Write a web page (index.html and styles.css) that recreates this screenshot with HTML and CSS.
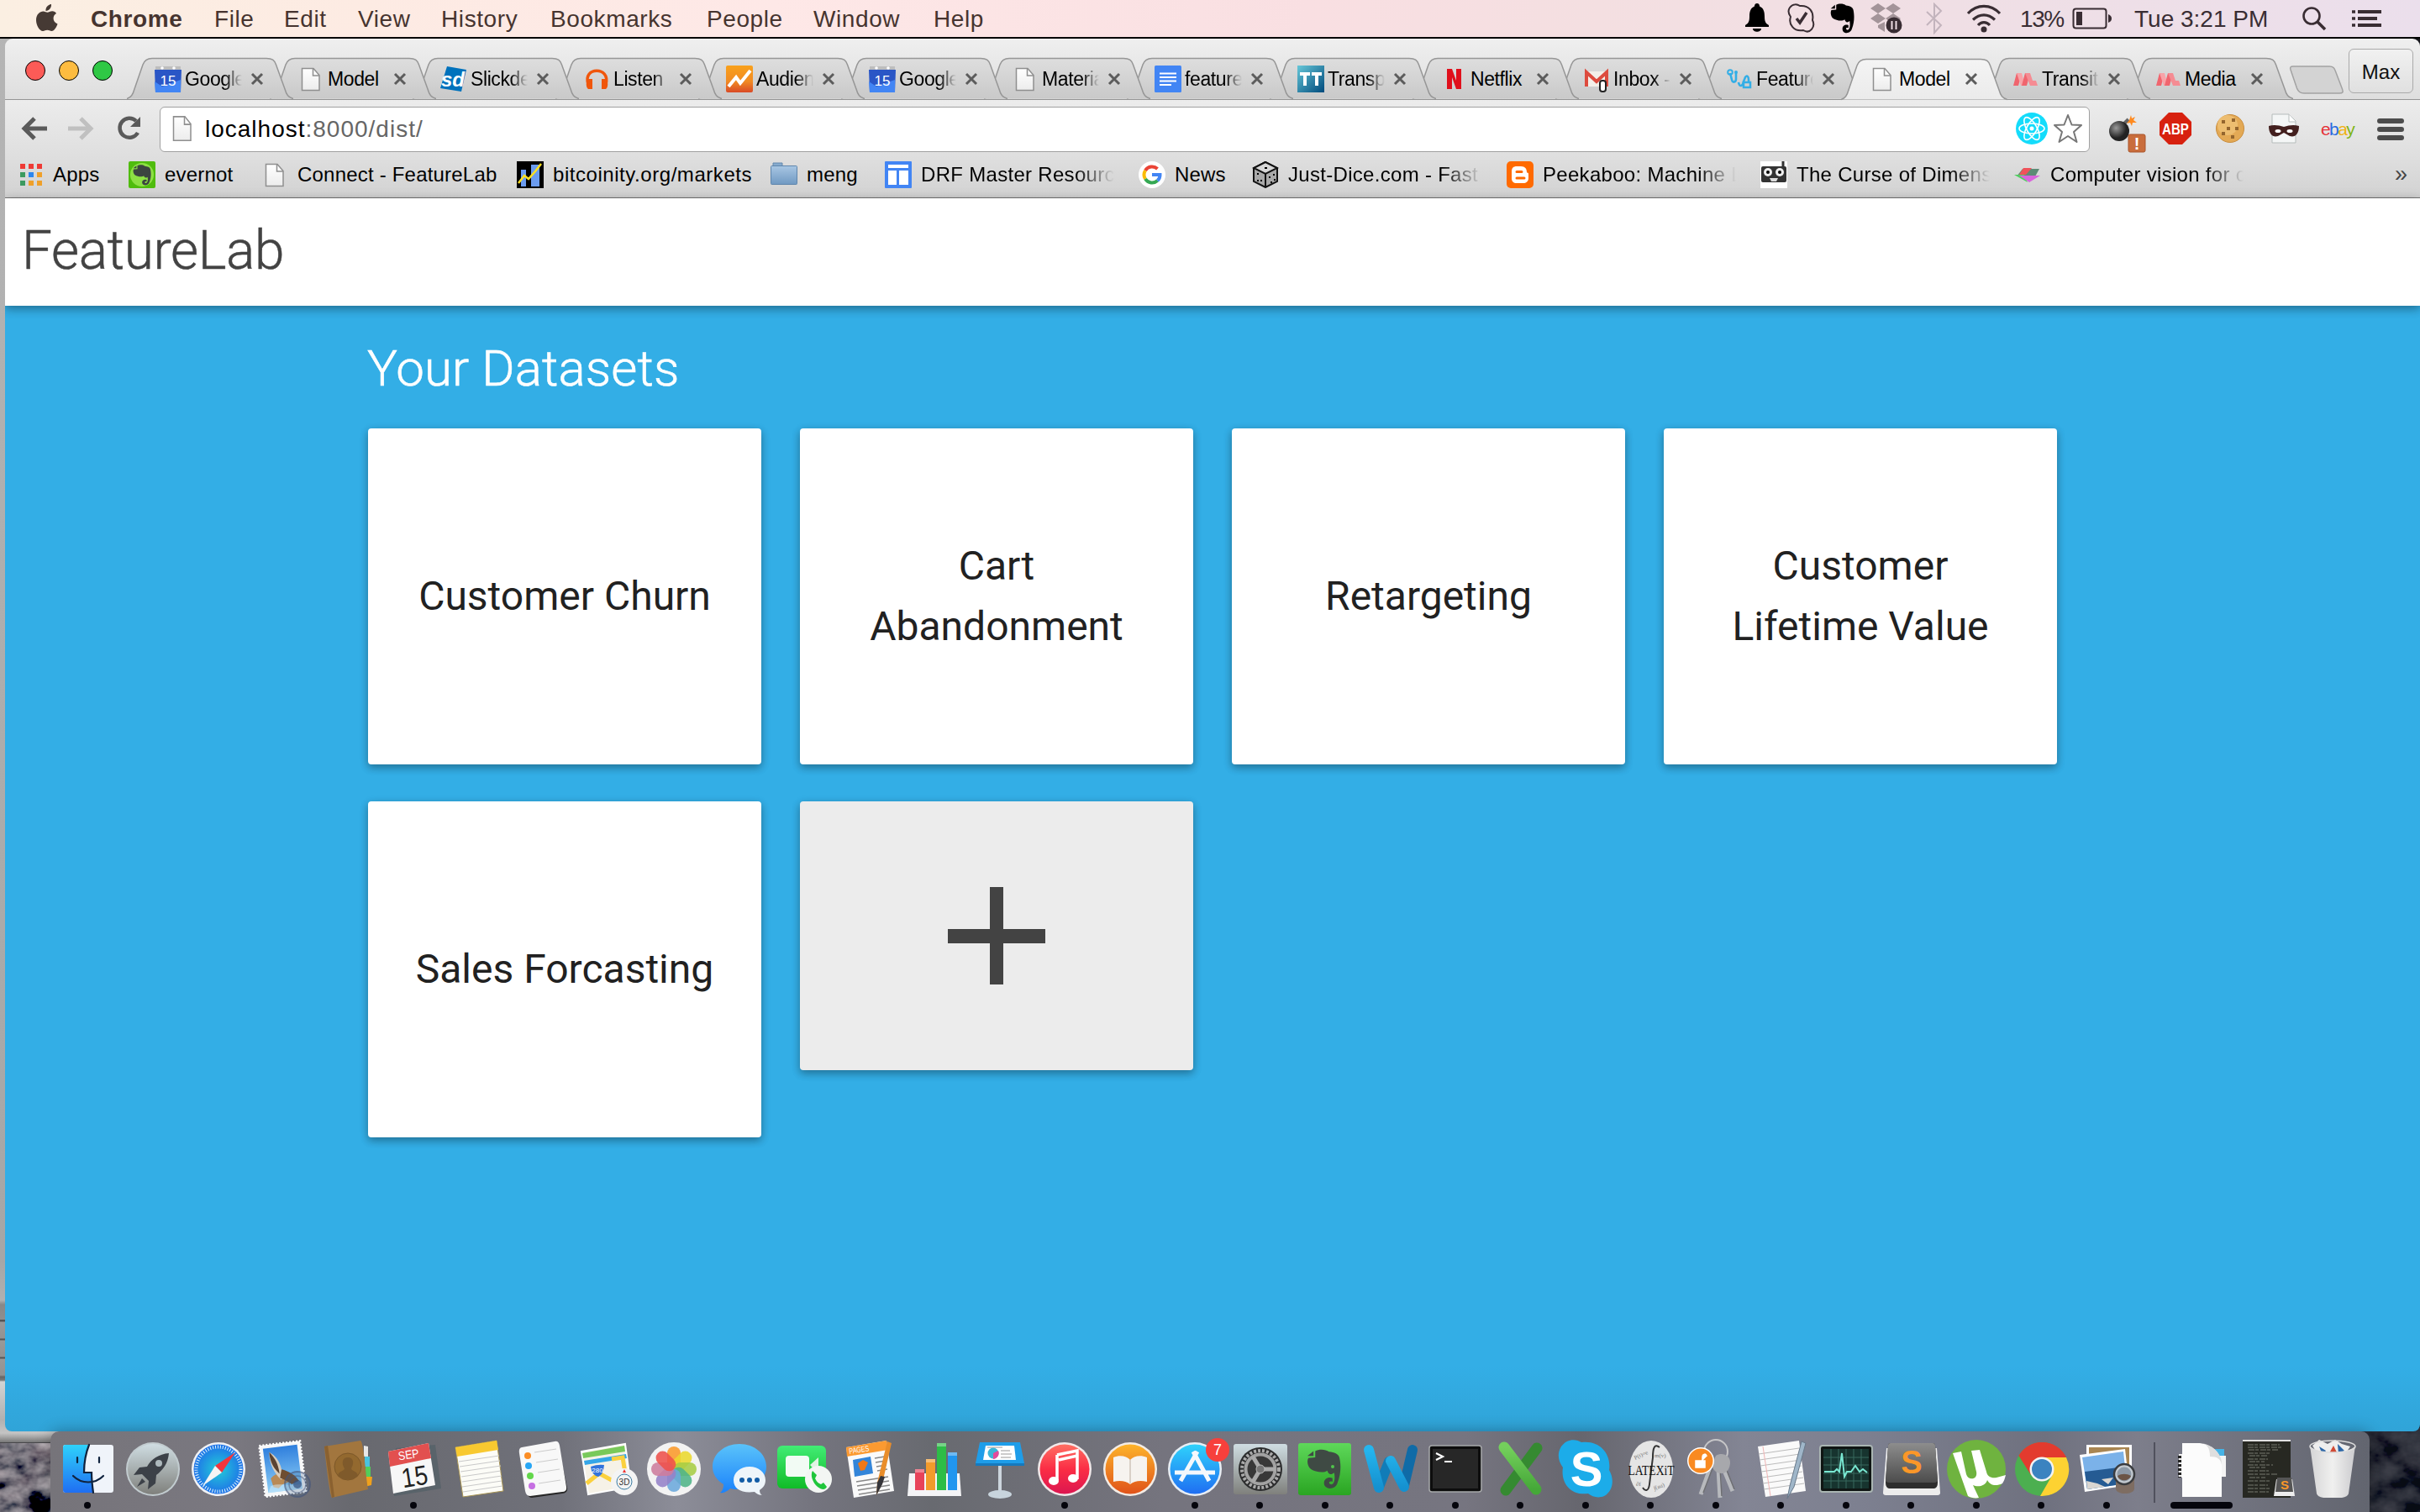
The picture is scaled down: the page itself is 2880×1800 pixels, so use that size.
FILE: index.html
```
<!DOCTYPE html>
<html lang="en">
<head>
<meta charset="utf-8">
<title>FeatureLab</title>
<link rel="stylesheet" href="styles.css">
</head>
<body>
<svg class="defs" width="0" height="0" aria-hidden="true">
  <defs>
    <linearGradient id="g-tab" x1="0" y1="0" x2="0" y2="1"><stop offset="0" stop-color="#dedede"/><stop offset="1" stop-color="#c9c9c9"/></linearGradient>
    <linearGradient id="g-active" x1="0" y1="0" x2="0" y2="1"><stop offset="0" stop-color="#f4f4f4"/><stop offset="1" stop-color="#ebebeb"/></linearGradient>
    <linearGradient id="g-doc" x1="0" y1="0" x2="0" y2="1"><stop offset="0" stop-color="#fff"/><stop offset="1" stop-color="#ececec"/></linearGradient>
    <linearGradient id="g-folder" x1="0" y1="0" x2="0" y2="1"><stop offset="0" stop-color="#a8c6e3"/><stop offset="1" stop-color="#7099c2"/></linearGradient>
    <linearGradient id="g-tt" x1="0" y1="0" x2="1" y2="1"><stop offset="0" stop-color="#66c7d8"/><stop offset="1" stop-color="#004a7c"/></linearGradient>
    <linearGradient id="g-ana" x1="0" y1="0" x2="0" y2="1"><stop offset="0" stop-color="#f9a11b"/><stop offset=".6" stop-color="#f08a24"/><stop offset="1" stop-color="#d94a26"/></linearGradient>
    <linearGradient id="g-cyan" x1="0" y1="0" x2="0" y2="1"><stop offset="0" stop-color="#2fd2fb"/><stop offset="1" stop-color="#1f6ef2"/></linearGradient>
    <linearGradient id="g-silver" x1="0" y1="0" x2="0" y2="1"><stop offset="0" stop-color="#cfdde2"/><stop offset="1" stop-color="#7f807c"/></linearGradient>
    <linearGradient id="g-msg" x1="0" y1="0" x2="0" y2="1"><stop offset="0" stop-color="#5ac3fa"/><stop offset="1" stop-color="#1b82fb"/></linearGradient>
    <linearGradient id="g-green" x1="0" y1="0" x2="0" y2="1"><stop offset="0" stop-color="#42ec75"/><stop offset="1" stop-color="#10bb27"/></linearGradient>
    <linearGradient id="g-red" x1="0" y1="0" x2="0" y2="1"><stop offset="0" stop-color="#ff6f63"/><stop offset=".5" stop-color="#fb2d45"/><stop offset="1" stop-color="#dc1650"/></linearGradient>
    <linearGradient id="g-orange" x1="0" y1="0" x2="0" y2="1"><stop offset="0" stop-color="#fdb32a"/><stop offset="1" stop-color="#e0531a"/></linearGradient>
    <linearGradient id="g-ever" x1="0" y1="0" x2="0" y2="1"><stop offset="0" stop-color="#5ed85a"/><stop offset="1" stop-color="#2aa522"/></linearGradient>
    <linearGradient id="g-word" x1="0" y1="0" x2="0" y2="1"><stop offset="0" stop-color="#25b5ee"/><stop offset="1" stop-color="#1591d0"/></linearGradient>
    <linearGradient id="g-excel" x1="0" y1="0" x2="0" y2="1"><stop offset="0" stop-color="#74cf5c"/><stop offset="1" stop-color="#45a838"/></linearGradient>
    <linearGradient id="g-key" x1="0" y1="0" x2="0" y2="1"><stop offset="0" stop-color="#8d8d8d"/><stop offset="1" stop-color="#4c4c4c"/></linearGradient>
    <linearGradient id="g-sky" x1="0" y1="0" x2="0" y2="1"><stop offset="0" stop-color="#2f7fdd"/><stop offset="1" stop-color="#8fd0f7"/></linearGradient>
    <linearGradient id="g-trash" x1="0" y1="0" x2="1" y2="0"><stop offset="0" stop-color="#d5d5d6"/><stop offset=".5" stop-color="#f0f0ef"/><stop offset="1" stop-color="#cbcbce"/></linearGradient>
    <radialGradient id="g-safari"><stop offset="0" stop-color="#22cdd8"/><stop offset="1" stop-color="#1f72e8"/></radialGradient>
    <radialGradient id="g-bomb" cx=".35" cy=".35"><stop offset="0" stop-color="#999"/><stop offset="1" stop-color="#222"/></radialGradient>
    <symbol id="tab" viewBox="0 0 198 50" overflow="visible"><path d="M0 49.5C5 48 7 45 9 38L19 9C21 3.500 24 1.500 30 1.500H166C173 1.500 175.500 3.500 177.500 9L188 38C190 45 192 48 198 49.500"/></symbol>
    <symbol id="i-doc" viewBox="0 0 32 32"><path d="M5.500 3.500H19l7 8V29.500H5.500Z" fill="url(#g-doc)" stroke="#8f8f8f" stroke-width="1.500"/><path d="M18.500 3.500V12H26" fill="none" stroke="#8f8f8f" stroke-width="1.500"/></symbol>
    <symbol id="i-cal" viewBox="0 0 32 32"><path d="M1 1h30v6H1z" fill="#bdbdbd"/><circle cx="9" cy="3" r="1.800" fill="#fff"/><circle cx="23" cy="3" r="1.800" fill="#fff"/><path d="M0 5h32l-1 27H1z" fill="#2a56c6"/><path d="M0 19l9 6 22-8v15H1z" fill="#4285f4"/><text x="16" y="24" font-size="17" text-anchor="middle" fill="#fff">15</text></symbol>
    <symbol id="i-mat" viewBox="0 0 32 32"><path d="M2 24L6 9h6L8 24z" fill="#f0656e"/><path d="M6 9h6l4 15h-5z" fill="#f8a3a8"/><path d="M12 24L16 9h6l-4 15z" fill="#f0656e"/><path d="M16 9h6l3 9h4l2 6h-9z" fill="#f58c93"/></symbol>
    <symbol id="i-x" viewBox="0 0 16 16"><path d="M2 2L14 14M14 2L2 14" stroke="#5c5c5c" stroke-width="3" fill="none"/></symbol>
    <symbol id="elephant" viewBox="0 0 40 58" preserveAspectRatio="none"><path d="M10 3C14 0 22 0 26 4C32 5 37 7 38 12C40 22 40 36 36 48C34 58 24 59 21 53C18 45 24 39 30 42V47C25 45 25 51 29 51C33 50 33 40 32 34C28 38 25 36 24 31C20 35 10 33 5 29C1 25 0 17 2 13L10 12Z"/><path d="M1 10L8 3V10Z"/></symbol>
  </defs>
</svg>

<div class="screen">
  <svg class="wallpaper" width="2880" height="100" viewBox="0 0 2880 100">
    <filter id="rock" x="0" y="0" width="100%" height="100%"><feTurbulence type="fractalNoise" baseFrequency=".028 .04" numOctaves="4" seed="8"/><feColorMatrix values="1.100 0 0 0 -.38  1 0.050 0 0 -.37  1 0.050 0 0 -.34  0 0 0 0 1"/></filter>
    <rect width="100" height="100" filter="url(#rock)"/><rect x="2780" width="100" height="100" filter="url(#rock)"/><rect x="2780" width="100" height="100" fill="#0b101c" opacity=".72"/>
  </svg>

  <header class="menubar">
    <svg class="apple" width="28" height="34" viewBox="0 0 28 34"><path d="M19 1c.5 4-2.500 8-6.500 8C12 5 15 1.500 19 1zM25 12c-5 3-4.500 10 1.500 12.500-1 3.500-4 8.500-7 8.500-2 0-3-1.200-5.200-1.200S11 33 9 33C5 33 1 26 1 20c0-7 4.500-10.500 8.500-10.500 2 0 3.600 1.300 5 1.300s3.200-1.500 5.800-1.500c2 0 3.700 1 4.700 2.700z" fill="#463a34"/></svg>
    <b class="m w1">Chrome</b><span class="m w2">File</span><span class="m w3">Edit</span><span class="m w4">View</span><span class="m w5">History</span><span class="m w6">Bookmarks</span><span class="m w7">People</span><span class="m w8">Window</span><span class="m">Help</span>
    <div class="status">
      <svg class="s1" width="32" height="36" viewBox="0 0 32 36"><path d="M16 0c2 0 3 1.500 3 3.500 5 2 6 7 6 12 0 6 1 8 5 10.500v2H2v-2c4-2.500 5-4.500 5-10.500 0-5 1-10 6-12C13 1.500 14 0 16 0zM11 30h10c0 5-10 5-10 0z"/></svg>
      <svg class="s2" width="34" height="36" viewBox="0 0 34 36"><path d="M3 5C7 0 12 1 15 3C26 2 32 10 30 20C34 28 27 37 19 32C8 34 1 25 4 16C1 12 1 8 3 5Z" fill="none" stroke="#392d33" stroke-width="2"/><path d="M11 18l4 5 8-12" fill="none" stroke="#392d33" stroke-width="3.500"/></svg>
      <svg class="s3" width="29" height="36" viewBox="0 0 29 36"><use href="#elephant" width="29" height="36"/></svg>
      <svg class="s4" width="40" height="38" viewBox="0 0 40 38"><g fill="#a39499"><path d="M10 1l9 6-9 6-9-6zM28 1l9 6-9 6-9-6zM10 13l9 6-9 6-9-6zM28 13l9 6-9 6-9-6zM10 27l8-4v12l-8-5z"/></g><circle cx="29" cy="27" r="9.500" fill="#392d33"/><path d="M26.500 22v10M31.500 22v10" stroke="#eddde3" stroke-width="2"/></svg>
      <svg class="s5" width="22" height="38" viewBox="0 0 22 38"><path d="M2 11l17 16-8 9V2l8 8L2 27" fill="none" stroke="#c3b4bd" stroke-width="2"/></svg>
      <svg class="s6" width="42" height="34" viewBox="0 0 42 34"><g fill="none" stroke="#392d33" stroke-width="3.200"><path d="M2 11C13-.5 29-.5 40 11M8 18.500c8-7.500 18-7.500 26 0M14 25c4-4.500 10-4.500 14 0"/></g><circle cx="21" cy="30" r="3.500" fill="#392d33"/></svg>
      <span class="s7">13%</span>
      <svg class="s8" width="48" height="26" viewBox="0 0 48 26"><rect x="1.500" y="1.500" width="39" height="23" rx="3" fill="none" stroke="#392d33" stroke-width="2"/><path d="M5 5h7v16H5zM43 8c3 1 4 3 4 5s-1 4-4 5z" fill="#392d33"/></svg>
      <span class="s9">Tue 3:21 PM</span>
      <svg class="s10" width="30" height="30" viewBox="0 0 30 30"><circle cx="12" cy="12" r="9.500" fill="none" stroke="#392d33" stroke-width="2.600"/><path d="M19 19l9 9" stroke="#392d33" stroke-width="3.500"/></svg>
      <svg width="38" height="22" viewBox="0 0 38 22"><path d="M8 3h28M8 11h23M8 19h28" stroke="#392d33" stroke-width="3.800"/><path d="M1 3h4M1 11h4M1 19h4" stroke="#392d33" stroke-width="3.500"/></svg>
    </div>
  </header>

  <main class="window">
    <div class="tabstrip">
      <div class="lights"><i class="red"></i><i class="amber"></i><i class="green"></i></div>
      <div class="tabs">
        <div class="tab t1"><svg class="shape"><use href="#tab"/></svg><svg class="fav"><use href="#i-cal"/></svg><span class="tt fade">Google</span><svg class="x"><use href="#i-x"/></svg></div>
        <div class="tab t2"><svg class="shape"><use href="#tab"/></svg><svg class="fav"><use href="#i-doc"/></svg><span class="tt">Model</span><svg class="x"><use href="#i-x"/></svg></div>
        <div class="tab t3"><svg class="shape"><use href="#tab"/></svg><svg class="fav" viewBox="0 0 32 32"><path d="M8 1l23 4-6 26L0 27z" fill="#0072bc"/><text x="15" y="25" font-size="24" font-weight="bold" font-style="italic" text-anchor="middle" fill="#fff">sd</text></svg><span class="tt fade">Slickde</span><svg class="x"><use href="#i-x"/></svg></div>
        <div class="tab t4"><svg class="shape"><use href="#tab"/></svg><svg class="fav" viewBox="0 0 32 32"><path d="M6 22C-1 1 33 1 27 22" fill="none" stroke="#f0560c" stroke-width="3.500"/><path d="M6 16h5v12H6c-3-2-3-9 0-12zM27 16h-5v12h5c3-2 3-9 0-12z" fill="#f0560c"/></svg><span class="tt fade">Listen</span><svg class="x"><use href="#i-x"/></svg></div>
        <div class="tab t5"><svg class="shape"><use href="#tab"/></svg><svg class="fav" viewBox="0 0 32 32"><rect width="32" height="32" rx="2" fill="url(#g-ana)"/><path d="M3 25l9-11 5 7L29 6" fill="none" stroke="#fff" stroke-width="4"/></svg><span class="tt fade">Audien</span><svg class="x"><use href="#i-x"/></svg></div>
        <div class="tab t6"><svg class="shape"><use href="#tab"/></svg><svg class="fav"><use href="#i-cal"/></svg><span class="tt fade">Google</span><svg class="x"><use href="#i-x"/></svg></div>
        <div class="tab t7"><svg class="shape"><use href="#tab"/></svg><svg class="fav"><use href="#i-doc"/></svg><span class="tt fade">Materia</span><svg class="x"><use href="#i-x"/></svg></div>
        <div class="tab t8"><svg class="shape"><use href="#tab"/></svg><svg class="fav" viewBox="0 0 32 32"><rect width="32" height="32" rx="1.500" fill="#4285f4"/><path d="M6 9.500h20M6 14h20M6 18.500h20M6 23h14" stroke="#fff" stroke-width="2.200"/></svg><span class="tt fade">feature</span><svg class="x"><use href="#i-x"/></svg></div>
        <div class="tab t9"><svg class="shape"><use href="#tab"/></svg><svg class="fav" viewBox="0 0 32 32"><rect width="32" height="32" fill="url(#g-tt)"/><path d="M3 8h12v4h-4v12H7V12H3zM17 8h12v4h-4v12h-4V12h-4z" fill="#fff"/></svg><span class="tt fade">Transp</span><svg class="x"><use href="#i-x"/></svg></div>
        <div class="tab t10"><svg class="shape"><use href="#tab"/></svg><svg class="fav" viewBox="0 0 32 32"><path d="M8 4h6l5 14V4h6v24h-6l-5-14v14H8z" fill="#e0101c"/></svg><span class="tt">Netflix</span><svg class="x"><use href="#i-x"/></svg></div>
        <div class="tab t11"><svg class="shape"><use href="#tab"/></svg><svg class="fav" viewBox="0 0 32 32"><path d="M3 7h26v18H3z" fill="#f3efe9"/><path d="M4 25V8l12 11L28 8v17" fill="none" stroke="#dd4b3e" stroke-width="4"/><rect x="20" y="18" width="7" height="13" rx="3" fill="#fff" stroke="#222" stroke-width="2"/></svg><span class="tt fade">Inbox -</span><svg class="x"><use href="#i-x"/></svg></div>
        <div class="tab t12"><svg class="shape"><use href="#tab"/></svg><svg class="fav" viewBox="0 0 32 32"><path d="M5 9l2 8c1 4 5 3 5-1V9M15 20c1 6 5 5 6-1l2-5c2-3 4-1 4 3v3" fill="none" stroke="#33aee6" stroke-width="2.600"/><circle cx="5" cy="8" r="2.800" fill="none" stroke="#33aee6" stroke-width="2"/><circle cx="12" cy="8" r="2" fill="#33aee6"/><rect x="21" y="20" width="8" height="6" fill="none" stroke="#33aee6" stroke-width="2.500"/></svg><span class="tt fade">Feature</span><svg class="x"><use href="#i-x"/></svg></div>
        <div class="tab active"><svg class="shape"><use href="#tab"/></svg><svg class="fav"><use href="#i-doc"/></svg><span class="tt">Model</span><svg class="x"><use href="#i-x"/></svg></div>
        <div class="tab t14"><svg class="shape"><use href="#tab"/></svg><svg class="fav"><use href="#i-mat"/></svg><span class="tt fade">Transit</span><svg class="x"><use href="#i-x"/></svg></div>
        <div class="tab t15"><svg class="shape"><use href="#tab"/></svg><svg class="fav"><use href="#i-mat"/></svg><span class="tt">Media</span><svg class="x"><use href="#i-x"/></svg></div>
      </div>
      <svg class="newtab" width="66" height="34" viewBox="0 0 66 34"><path d="M5 1H48C53 1 54 3 55.500 7L63.500 28C65 32 64 33 60 33H18C13 33 11 31 9.500 27L2 5C1 2 2 1 5 1Z" fill="#d3d3d3" stroke="#a2a2a2" stroke-width="1.500"/></svg>
      <div class="profile">Max</div>
    </div>

    <div class="toolbar">
      <svg class="back" width="34" height="30" viewBox="0 0 34 30"><path d="M17 3L5 15l12 12M6 15h26" fill="none" stroke="#5a5a5a" stroke-width="5"/></svg>
      <svg class="fwd" width="34" height="30" viewBox="0 0 34 30"><path d="M17 3l12 12-12 12M28 15H2" fill="none" stroke="#c0c0c0" stroke-width="5"/></svg>
      <svg class="reload" width="30" height="30" viewBox="0 0 30 30"><path d="M25 20A11.500 11.500 0 1 1 23 6" fill="none" stroke="#5a5a5a" stroke-width="4.500"/><path d="M28 1v12H16z" fill="#5a5a5a"/></svg>
      <div class="omnibox">
        <svg width="32" height="35" viewBox="0 0 32 32" preserveAspectRatio="none"><use href="#i-doc"/></svg>
        <span class="url">localhost<em>:8000/dist/</em></span>
        <svg class="react" width="38" height="38" viewBox="0 0 38 38"><circle cx="19" cy="19" r="19" fill="#14dcfb"/><g fill="none" stroke="#fff" stroke-width="1.600"><ellipse cx="19" cy="19" rx="15" ry="6"/><ellipse cx="19" cy="19" rx="15" ry="6" transform="rotate(60 19 19)"/><ellipse cx="19" cy="19" rx="15" ry="6" transform="rotate(120 19 19)"/></g><circle cx="19" cy="19" r="2.500" fill="#fff"/></svg>
        <svg width="36" height="36" viewBox="0 0 36 36"><path d="M18 2l4.500 11.500L34 14l-9 8 3.500 12L18 27 7.500 34 11 22l-9-8 11.500-.5z" fill="#fff" stroke="#777" stroke-width="2" stroke-linejoin="round"/></svg>
      </div>
      <svg class="bomb" width="48" height="46" viewBox="0 0 48 46"><path d="M17 12L24 5" stroke="#666" stroke-width="4"/><path d="M27 0l1 4 4-2-2 4 4 3-5 0-1 4-2-4-4 1 3-4z" fill="#ff8a1f"/><circle cx="13" cy="19" r="12" fill="url(#g-bomb)"/><rect x="24" y="23" width="20" height="21" rx="2" fill="#c96d3c" stroke="#a9542a"/><text x="34" y="41" font-size="20" font-weight="bold" text-anchor="middle" fill="#fff">!</text></svg>
      <svg class="abp" width="38" height="38" viewBox="0 0 38 38"><path d="M11 0h16l11 11v16L27 38H11L0 27V11z" fill="#d7210f"/><text transform="translate(19 25.500) scale(.84 1)" font-size="18" font-weight="bold" text-anchor="middle" fill="#fff">ABP</text></svg>
      <svg class="cookie" width="36" height="36" viewBox="0 0 36 36"><circle cx="18" cy="18" r="16.500" fill="#e3a955" stroke="#c98d3e"/><circle cx="15" cy="14" r="12" fill="#edbd70"/><g fill="#94652e"><rect x="8" y="8" width="4" height="4"/><rect x="20" y="6" width="4" height="4"/><rect x="14" y="16" width="4" height="4"/><rect x="24" y="16" width="4" height="4"/><rect x="8" y="22" width="4" height="4"/><rect x="19" y="26" width="4" height="4"/></g></svg>
      <svg class="mask" width="40" height="36" viewBox="0 0 40 36"><path d="M6 1h20l8 8v26H6z" fill="#f4f6f6" stroke="#b5bcbb"/><path d="M26 1v9h8" fill="#fff" stroke="#b5bcbb"/><path d="M2 15c6-2 12-1 18 1 6-2 12-3 18-1 0 10-5 14-11 12l-7-4-7 4C7 29 2 25 2 15z" fill="#43201f"/><ellipse cx="13" cy="21" rx="3.500" ry="2" fill="#fff"/><ellipse cx="27" cy="21" rx="3.500" ry="2" fill="#fff"/></svg>
      <span class="ebay"><i class="e1">e</i><i class="e2">b</i><i class="e3">a</i><i class="e4">y</i></span>
      <svg width="32" height="28" viewBox="0 0 32 28"><path d="M3 4h26M3 14h26M3 24h26" stroke="#4c4c4c" stroke-width="6" stroke-linecap="round"/></svg>
    </div>

    <nav class="bookmarks">
      <div class="bm b0"><svg width="28" height="28" viewBox="0 0 28 28"><path d="M0 1h6v6H0zM10 1h6v6h-6zM20 1h6v6h-6z" fill="#ee3a35"/><path d="M0 11h6v6H0zM0 21h6v6H0z" fill="#3c9a5f"/><path d="M10 11h6v6h-6z" fill="#2c86ef"/><path d="M20 11h6v6h-6zM10 21h6v6h-6zM20 21h6v6h-6z" fill="#efa02a"/></svg><span>Apps</span></div>
      <div class="bm b1"><svg viewBox="0 0 32 32"><rect width="32" height="32" rx="2" fill="#4fbc0d"/><circle cx="16" cy="16" r="14" fill="#a8f05c" opacity=".7"/><use href="#elephant" x="5" y="4" width="22" height="25" fill="#3c4540"/></svg><span>evernot</span></div>
      <div class="bm b2"><svg><use href="#i-doc"/></svg><span>Connect - FeatureLab</span></div>
      <div class="bm b3"><svg viewBox="0 0 32 32"><rect width="32" height="32"/><path d="M5 10h6v20H5zM17 4h10v26H17z" fill="#6b9cf0"/><path d="M2 26l7-9 5 4 8-9 7-9" fill="none" stroke="#ffe020" stroke-width="2.500"/></svg><span class="wide-text">bitcoinity.org/markets</span></div>
      <div class="bm b4"><svg viewBox="0 0 32 32"><path d="M3 5V2h11v4" fill="#86aacd" stroke="#6489ae"/><rect x=".5" y="5.500" width="31" height="22" rx="1" fill="url(#g-folder)" stroke="#5f86ad"/></svg><span>meng</span></div>
      <div class="bm b5"><svg viewBox="0 0 32 32"><rect width="32" height="32" rx="1" fill="#4285f4"/><path d="M4 4h24v4H4zM4 11h10v17H4zM17 11h11v17H17z" fill="#fff"/></svg><span class="fade">DRF Master Resourc</span></div>
      <div class="bm b6"><svg viewBox="0 0 32 32"><circle cx="16" cy="16" r="16" fill="#fff"/><g fill="none" stroke-width="4"><path d="M22.500 9A9.500 9.500 0 0 0 8 11" stroke="#ea4335"/><path d="M8 11a9.500 9.500 0 0 0 0 10" stroke="#fbbc05"/><path d="M8 21a9.500 9.500 0 0 0 14.500 2" stroke="#34a853"/><path d="M22.500 23a9 9 0 0 0 3-7H16" stroke="#4285f4"/></g></svg><span>News</span></div>
      <div class="bm b7"><svg viewBox="0 0 32 32"><path d="M16 1L2 8v16l14 7 14-7V8z" fill="#a9a9a9" stroke="#111" stroke-width="2"/><path d="M16 1L2 8l14 7 14-7z" fill="#d7d7d7" stroke="#111" stroke-width="2"/><path d="M16 15v16" stroke="#111" stroke-width="2"/><path d="M6 14h2v2H6zM10 22h2v2h-2zM6 22h2v2H6zM20 18h2v2h-2zM25 15h2v2h-2zM22 24h2v2h-2zM26 21h2v2h-2zM15 7h3v2h-3z"/></svg><span class="fade">Just-Dice.com - Fast</span></div>
      <div class="bm b8"><svg viewBox="0 0 32 32"><rect width="32" height="32" rx="5" fill="#ff6a00"/><path d="M12 6h5c5 0 7 3 7 7 0 1 2 0 2 2v5c0 4-3 6-6 6h-8c-4 0-6-2-6-6v-8c0-4 2-6 6-6z" fill="#fff"/><path d="M12 12.500h6M12 20h9" stroke="#ff6a00" stroke-width="3" stroke-linecap="round"/></svg><span class="fade">Peekaboo: Machine L</span></div>
      <div class="bm b9"><svg viewBox="0 0 32 32"><rect width="32" height="32" fill="#fff"/><rect x="1" y="6" width="30" height="19" rx="2" fill="#333"/><path d="M27 0v9" stroke="#333" stroke-width="3"/><circle cx="9" cy="13" r="5" fill="#eee"/><circle cx="23" cy="13" r="5" fill="#eee"/><circle cx="9" cy="13" r="2"/><circle cx="23" cy="13" r="2"/><path d="M11 20h10l-2 4h-6z" fill="#ddd"/></svg><span class="fade">The Curse of Dimens</span></div>
      <div class="bm b10"><svg viewBox="0 0 32 32"><path d="M10 9h20l-5 9H3z" fill="#5d8b76"/><path d="M11 8h10l-7 8H6z" fill="#f0525a"/><path d="M0 16h12l4 9z" fill="#4fcf60"/><path d="M6 17h25L18 25z" fill="#d964dc"/></svg><span class="fade">Computer vision for c</span></div>
      <span class="more">»</span>
    </nav>

    <section class="page">
      <header class="appbar"><h1>FeatureLab</h1></header>
      <div class="content">
        <h2>Your Datasets</h2>
        <div class="grid">
          <div class="card">Customer Churn</div>
          <div class="card">Cart<br>Abandonment</div>
          <div class="card">Retargeting</div>
          <div class="card">Customer<br>Lifetime Value</div>
          <div class="card">Sales Forcasting</div>
          <div class="card add"><svg width="118" height="118" viewBox="0 0 118 118"><path d="M51 1h16v50h50v17H67v49H51V68H1V51h50z" fill="#434343"/></svg></div>
        </div>
      </div>
    </section>
  </main>

  <footer class="dock">
    <div class="app on"><svg viewBox="0 0 72 72"><rect x="6" y="7" width="60" height="57" rx="3" fill="#f0f4fa"/><path d="M9 7H37C33 17 31 28 31 40h9c0 9 1 17 2 24H9a3 3 0 0 1-3-3V10a3 3 0 0 1 3-3z" fill="url(#g-cyan)"/><path d="M37 7C33 17 31 28 31 40h9c0 9 1 17 2 24M23 22v6M49 22v6M18 44c10 10 26 10 36 0" fill="none" stroke="#10233e" stroke-width="2.200" stroke-linecap="round"/></svg></div>
    <div class="app"><svg viewBox="0 0 72 72"><circle cx="36" cy="36" r="32" fill="#c2ccd0"/><circle cx="36" cy="36" r="30" fill="url(#g-silver)"/><path d="M55 17C43 18 34 24 29 33l-9 1-7 9 10-1 8 8-1 10 9-7 1-10C48 37 54 29 55 17zM23 47l-6 10 10-6z" fill="#3c4148"/><circle cx="43" cy="29" r="4" fill="#aeb9bd"/></svg></div>
    <div class="app"><svg viewBox="0 0 72 72"><circle cx="36" cy="36" r="32" fill="#f1f2f4"/><circle cx="36" cy="36" r="29.500" fill="url(#g-safari)"/><circle cx="36" cy="36" r="26.500" fill="none" stroke="#dff3ff" stroke-width="4" stroke-dasharray="1 2"/><path d="M56 16L40 40 32 32z" fill="#f3343c"/><path d="M32 32l8 8-23 16z" fill="#f4f4f4"/></svg></div>
    <div class="app"><svg viewBox="0 0 72 72"><g transform="rotate(-7 36 36)"><rect x="11" y="5" width="49" height="61" fill="#f7f7f7" stroke="#fff" stroke-width="2.500" stroke-dasharray="2 2"/><rect x="15" y="9" width="41" height="53" fill="url(#g-sky)"/><path d="M20 45c5-4 9-5 13-4l16 4-4 6-12 3-5 4-6-2z" fill="#b98a55"/><path d="M22 14c7 5 11 12 12 22l6 8-8 4c-7-8-12-20-10-34z" fill="#d8cdbd"/><path d="M22 14c6 8 9 15 9 27-5-6-10-14-9-27z" fill="#5b4433"/><path d="M34 36c8 3 15 8 19 16l-9 3c-4-4-9-7-13-9z" fill="#6e4d31"/><path d="M19 54c10-3 25 4 37 2v6H15z" fill="#d9f0fb" opacity=".5"/></g><circle cx="53" cy="54" r="15" fill="#3d5f8c" fill-opacity=".25" stroke="#44557a" stroke-opacity=".6" stroke-width="2"/><circle cx="53" cy="54" r="10" fill="none" stroke="#44557a" stroke-opacity=".5" stroke-width="1.500"/><circle cx="53" cy="54" r="5" fill="#34507e" fill-opacity=".7"/></svg></div>
    <div class="app"><svg viewBox="0 0 72 72"><path d="M54 8l5 1v12h-5z" fill="#e8e8e8"/><path d="M55 21h6v12h-6z" fill="#4ac3df"/><path d="M56 33h6v12h-6z" fill="#53cd5a"/><path d="M57 45h7l-1 10-8 2z" fill="#f0a11c"/><path d="M7 9L50 2c4 2 6 40 9 58L16 70c-3-5-7-40-9-61z" fill="#a2763e"/><path d="M7 9l4-1c3 18 6 45 8 61l-3 1z" fill="#8a6130"/><circle cx="35" cy="33" r="16" fill="#93692f" stroke="#7c5829"/><path d="M35 22c8 0 7 9 4 13 0 4 7 2 8 9-7 6-17 6-24 0 1-7 8-5 8-9-3-4-4-13 4-13z" fill="#7f5a2b"/></svg></div>
    <div class="app on"><svg viewBox="0 0 72 72"><path d="M15 11l47-4 7 52-56 9z" fill="#59636a"/><path d="M6 15L54 5l8 50-50 10z" fill="#f7f7f7"/><path d="M6 15L54 5l3 18-49 10z" fill="#e2504f"/><g transform="rotate(-9 36 36)"><text transform="translate(33 23) scale(.95 1.100)" font-size="13" text-anchor="middle" fill="#fff">SEP</text><text transform="translate(36 56) scale(.9 1.050)" font-size="31" text-anchor="middle" fill="#222">15</text></g></svg></div>
    <div class="app"><svg viewBox="0 0 72 72"><path d="M8 10l49-8 8 60-48 7z" fill="#fcfcf7" stroke="#a99554"/><path d="M8 10l49-8 2 11-49 8z" fill="#f8c930"/><path d="M12 27l48-7M13 33l48-7M14 39l48-7M15 45l47-7M16 51l47-7M16 57l47-7M17 63l47-7" stroke="#c9c9c9"/></svg></div>
    <div class="app"><svg viewBox="0 0 72 72"><path d="M12 12L48 5q5-1 6 5l10 48q1 6-6 7L22 70q-5 0-6-7z" fill="#272727"/><path d="M10 10L49 3q5-1 6 5l8 49q1 6-5 6L20 68q-5 0-6-6L7 17q-1-6 3-7z" fill="#f8f8f8"/><circle cx="17" cy="20" r="4" fill="#fb8d24"/><circle cx="18" cy="32" r="4" fill="#27a6f5"/><circle cx="20" cy="44" r="4" fill="#63d74b"/><circle cx="22" cy="56" r="4" fill="#c66fe2"/><path d="M25 16l26-4M27 28l26-4M29 40l26-4M30 53l26-4" stroke="#ccc"/></svg></div>
    <div class="app"><svg viewBox="0 0 72 72"><path d="M3 15L55 6l7 51-51 9z" fill="#f6f2e7" stroke="#fff" stroke-width="2"/><path d="M4 17l50-9 1 7-50 8z" fill="#79c95a"/><path d="M6 26l50-8 1 5-50 8z" fill="#35a6e8"/><path d="M9 53l15-12 22 12 15-2M39 24l13-2 5 31" fill="none" stroke="#fbd13e" stroke-width="5"/><path d="M14 33q8-3 16-2-1 12-7 14-8-2-9-12z" fill="#3173dc"/><text x="22" y="40" font-size="8" text-anchor="middle" fill="#fff">280</text><circle cx="54" cy="51" r="16" fill="#f4f4f4"/><circle cx="54" cy="51" r="9" fill="none" stroke="#397ba3"/><path d="M54 36l2 4h-4z" fill="#e33"/><text x="54" y="55" font-size="10" text-anchor="middle" fill="#333">3D</text></svg></div>
    <div class="app"><svg viewBox="0 0 72 72"><circle cx="36" cy="36" r="32" fill="#f3f3f3"/><g fill-opacity=".88"><rect x="28" y="9" width="16" height="27" rx="8" fill="#fb9a2a"/><rect x="28" y="9" width="16" height="27" rx="8" fill="#ead82e" transform="rotate(45 36 36)"/><rect x="28" y="9" width="16" height="27" rx="8" fill="#a7cd44" transform="rotate(90 36 36)"/><rect x="28" y="9" width="16" height="27" rx="8" fill="#4fb487" transform="rotate(135 36 36)"/><rect x="28" y="9" width="16" height="27" rx="8" fill="#6ba8dc" transform="rotate(180 36 36)"/><rect x="28" y="9" width="16" height="27" rx="8" fill="#9482c8" transform="rotate(225 36 36)"/><rect x="28" y="9" width="16" height="27" rx="8" fill="#cd7c9d" transform="rotate(270 36 36)"/><rect x="28" y="9" width="16" height="27" rx="8" fill="#ee514b" transform="rotate(315 36 36)"/></g></svg></div>
    <div class="app"><svg viewBox="0 0 72 72"><path d="M36 6c18 0 32 12 32 27S54 60 36 60c-4 0-8 0-11-1-4 4-9 6-12 5 3-2 4-6 4-10C9 49 4 42 4 33 4 18 18 6 36 6z" fill="url(#g-msg)"/><path d="M48 33c11 0 19 7 19 16 0 6-3 9-7 12 0 3 1 5 3 6-4 0-7-2-9-4-15 2-25-3-25-14 0-9 8-16 19-16z" fill="#eef5fa"/><circle cx="39" cy="49" r="3" fill="#125ca6"/><circle cx="48" cy="49" r="3" fill="#125ca6"/><circle cx="57" cy="49" r="3" fill="#125ca6"/></svg></div>
    <div class="app"><svg viewBox="0 0 72 72"><rect x="4" y="8" width="58" height="51" rx="6" fill="url(#g-green)"/><rect x="14" y="20" width="28" height="25" rx="4" fill="#f2fbf4"/><path d="M43 31l10-9v20z" fill="#dff3e3"/><circle cx="53" cy="48" r="16" fill="#f3f6f3"/><path d="M46 38l5 5-2 4c2 4 4 6 7 7l3-2 4 5c-2 4-6 4-11 0-6-5-9-14-6-19z" fill="#1fc63b"/></svg></div>
    <div class="app"><svg viewBox="0 0 72 72"><path d="M8 10L56 2l9 60-48 8z" fill="#fafafa"/><path d="M8 10L56 2l2 11-49 8z" fill="#fb9a31"/><text transform="translate(12 18) rotate(-9) scale(.75 1)" font-size="9.500" fill="#fff">PAGES</text><path d="M16 25l21-4 3 20-22 4z" fill="#3385d9"/><path d="M22 29l6-4 6 3-4 9-5 1z" fill="#f07818"/><path d="M42 23l12-2M43 28l12-2M44 33l12-2M45 38l12-2M20 51l38-6M21 56l38-6M22 61l38-6M23 66l37-6" stroke="#888" stroke-width="1.500"/><path d="M57 3l5 2-11 48-7 14 1-15z" fill="#e98d2a"/><path d="M49 44l5 1-3 9-7 13 1-15z" fill="#35353a"/></svg></div>
    <div class="app"><svg viewBox="0 0 72 72"><path d="M6 41h60l2 27H4z" fill="#f4f4f6"/><rect x="13" y="36" width="11" height="25" fill="#e8435a"/><rect x="26" y="24" width="11" height="37" fill="#f39b2b"/><rect x="39" y="5" width="11" height="56" fill="#2dbd47"/><rect x="52" y="16" width="11" height="45" fill="#2196ef"/><path d="M13 36h11v4H13zM26 24h11v4H26zM39 5h11v4H39zM52 16h11v4H52z" fill="#fff" opacity=".35"/></svg></div>
    <div class="app"><svg viewBox="0 0 72 72"><path d="M34 29h4v38h-4z" fill="#ccd5dd"/><ellipse cx="36" cy="66" rx="14" ry="5" fill="#c8d4dd"/><path d="M12 4h48l5 25H7z" fill="#1e9de9"/><path d="M7 29h58v3H7z" fill="#1679bd"/><path d="M19 8h34l2 17H16z" fill="#fff"/><circle cx="28" cy="17" r="6.500" fill="#3cb6d8"/><path d="M28 17l6-3a7 7 0 0 1-6 10z" fill="#e34b9b"/><path d="M37 14h11M37 18h13M37 22h12M21 10h18" stroke="#999"/></svg></div>
    <div class="app on"><svg viewBox="0 0 72 72"><circle cx="36" cy="36" r="32" fill="#f1e9ea"/><circle cx="36" cy="36" r="29.500" fill="url(#g-red)"/><path d="M27 19l24-5v34M27 49V19M29 25l22-5" fill="none" stroke="#fff" stroke-width="3.500"/><ellipse cx="23" cy="50" rx="6" ry="5" fill="#fff"/><ellipse cx="46" cy="47" rx="6" ry="5" fill="#fff"/></svg></div>
    <div class="app"><svg viewBox="0 0 72 72"><circle cx="36" cy="36" r="32" fill="#f3ece5"/><circle cx="36" cy="36" r="29.500" fill="url(#g-orange)"/><path d="M36 25c-4-5-13-6-20-3v29c8-2 15-1 20 3 5-4 12-5 20-3V22c-7-3-16-2-20 3z" fill="#f6f3ef"/><path d="M36 25v28" stroke="#cfc5ba" stroke-width="1.500"/></svg></div>
    <div class="app on"><svg viewBox="0 0 72 72"><circle cx="36" cy="36" r="32" fill="#e8eef4"/><circle cx="36" cy="36" r="29.500" fill="url(#g-cyan)"/><path d="M39 15L19 50M34 15l19 35M12 40h48" fill="none" stroke="#f4f8fc" stroke-width="5"/></svg><b class="badge">7</b></div>
    <div class="app on"><svg viewBox="0 0 72 72"><rect x="4" y="6" width="64" height="60" rx="3" fill="url(#g-silver)"/><circle cx="36" cy="36" r="26" fill="#2c2d2e"/><circle cx="36" cy="36" r="22" fill="none" stroke="#aaa" stroke-width="4" stroke-dasharray="3 2"/><circle cx="36" cy="36" r="17.500" fill="#383838" stroke="#a2a2a2" stroke-width="4"/><path d="M36 36h18M36 36l-9-15M36 36l-9 15" stroke="#aaa" stroke-width="5"/><circle cx="36" cy="36" r="5" fill="#777" stroke="#bbb"/></svg></div>
    <div class="app on"><svg viewBox="0 0 72 72"><rect x="4" y="5" width="63" height="62" rx="3" fill="url(#g-ever)"/><use href="#elephant" x="14" y="12" width="41" height="48" fill="#3f4a44"/><circle cx="45" cy="33" r="2" fill="#51c44c"/></svg></div>
    <div class="app on"><svg viewBox="0 0 72 72"><g fill="none" stroke-width="12" stroke-linecap="round"><path d="M62 13L52 55" stroke="#0f6ba7"/><path d="M34 27L22 57" stroke="#117cb8"/><path d="M10 13l12 45M36 26l16 31" stroke="url(#g-word)"/></g></svg></div>
    <div class="app on"><svg viewBox="0 0 72 72"><rect x="5" y="8" width="62" height="55" rx="3" fill="#0d0d0d" stroke="#a7a9aa" stroke-width="1.500"/><rect x="9" y="12" width="54" height="47" fill="#272727"/><path d="M13 17l8 4-8 4M23 27h9" fill="none" stroke="#fff" stroke-width="2.200"/></svg></div>
    <div class="app on"><svg viewBox="0 0 72 72"><g fill="none" stroke-width="13" stroke-linecap="round"><path d="M55 11L18 61" stroke="#358a31"/><path d="M16 10l38 50" stroke="url(#g-excel)"/></g></svg></div>
    <div class="app on"><svg viewBox="0 0 72 72"><path d="M7 9C14-1 25 0 31 4c21-3 36 13 33 33 7 12 4 26-6 31-7 3-14 1-19-3C18 68 6 52 9 34 3 26 2 17 7 9z" fill="#1cace9"/><text x="37" y="56" font-size="58" font-weight="bold" text-anchor="middle" fill="#fff">S</text></svg></div>
    <div class="app on"><svg viewBox="0 0 72 72"><ellipse cx="36" cy="36" rx="26" ry="34" fill="#e5e5e5"/><path d="M46 10c-6-5-8 1-8 12L34 54c-1 8-5 9-8 4" fill="none" stroke="#333" stroke-width="2"/><text class="serif" transform="translate(36 43) scale(.8 1)" font-size="17" text-anchor="middle" fill="#111">LATEXiT</text><g fill="#777" font-size="7" class="serif"><text x="17" y="25" transform="rotate(-25 17 25)">P(t)=e</text><text x="40" y="22">m(v)</text><text x="18" y="56">∂f</text><text x="40" y="61" transform="rotate(-20 40 61)">∫(au)</text></g></svg></div>
    <div class="app on"><svg viewBox="0 0 72 72"><g transform="translate(-2 0)"><circle cx="38" cy="15" r="14" fill="none" stroke="#c6c6c8" stroke-width="2"/><path d="M31 35l-11 31M41 35l2 35M47 35l11 27" stroke="#b7b9bd" stroke-width="5"/><path d="M34 35l-11 29M43 35l2 33M50 35l10 25" stroke="#6d6e72" stroke-width="1.500"/><path d="M38 20c8-5 17 0 17 8 0 7-4 13-10 13-8 0-12-6-11-12z" fill="#a7a8ac"/><circle cx="20" cy="26" r="16" fill="#fff"/><circle cx="20" cy="26" r="14.500" fill="#f98a21"/><path d="M14 26h11v8H14zM22 26v-4c0-5 5-5 5-1" fill="#fff" stroke="#fff" stroke-width="1.500"/></g></svg></div>
    <div class="app on"><svg viewBox="0 0 72 72"><path d="M8 9l49-7 8 60-48 7z" fill="#fafafa"/><path d="M9 18l48-7M10 25l48-7M11 32l48-7M12 39l48-7M13 46l48-7M14 53l48-7M15 60l48-7" stroke="#bbb"/><path d="M14 9l9 59" stroke="#f0b4b4"/><path d="M60 3l5 2-14 52-8 14 3-15z" fill="#9fb6c9" stroke="#68798a"/></svg></div>
    <div class="app on"><svg viewBox="0 0 72 72"><rect x="5" y="8" width="62" height="55" rx="3" fill="#0f1513" stroke="#a9b5b2" stroke-width="2"/><rect x="9" y="12" width="54" height="47" fill="#17342f"/><path d="M18 12v47M27 12v47M36 12v47M45 12v47M54 12v47M9 22h54M9 31h54M9 41h54M9 50h54" stroke="#39695f"/><path d="M10 39h12l3-3 3 3 3-22 3 28 3-6h5l5-7 5 7 4-3 5 4" fill="none" stroke="#79e8d2" stroke-width="2"/></svg></div>
    <div class="app on"><svg viewBox="0 0 72 72"><path d="M6 11h60l4 53q0 3-3 3H5q-3 0-3-3z" fill="#ececec"/><path d="M11 5h50q3 0 3 3l3 44q0 6-4 7H9q-4-1-4-7L8 8q0-3 3-3z" fill="#2d2d2d"/><path d="M11 5h50q3 0 3 3l3 40q0 4-4 4H9q-4 0-4-4L8 8q0-3 3-3z" fill="url(#g-key)"/><text x="36" y="41" font-size="38" font-weight="bold" text-anchor="middle" fill="#fb9728">S</text></svg></div>
    <div class="app on"><svg viewBox="0 0 72 72"><circle cx="36" cy="36" r="35" fill="#6fb33f"/><path d="M8 17l10-2 6 27c2 8 14 7 12-3l-6-25 10-1 8 26c1 6 6 8 12 7l11-3c-1 4-2 7-4 10-8 4-15 2-18-4-2 7-11 9-17 6l7 15c-4 1-10 0-13-2z" fill="#fff"/></svg></div>
    <div class="app on"><svg viewBox="0 0 72 72"><circle cx="36" cy="36" r="32" fill="#4caf50"/><path d="M36 36L8.500 20A32 32 0 0 1 65 22H36z" fill="#e33b2e"/><path d="M36 22h29A32 32 0 0 1 34 68l15-26z" fill="#fdd232"/><path d="M8.500 20L23 43l13-21h29A32 32 0 0 0 8.500 20z" fill="#e33b2e"/><circle cx="36" cy="36" r="14.500" fill="#f4f4f4"/><circle cx="36" cy="36" r="12" fill="#3b83c0"/></svg></div>
    <div class="app on"><svg viewBox="0 0 72 72"><path d="M12 7h54v46H12z" fill="#fff"/><path d="M15 10h48v40H15z" fill="#a98652"/><path d="M4 19l54-7 5 43-53 8z" fill="#fff"/><path d="M7 22l49-7 4 38-47 7z" fill="#7bb2e9"/><path d="M10 39l48-6 2 20-47 7z" fill="#255b93"/><path d="M12 50l13 3 9 4-21 3zM30 48l14-2-6 8z" fill="#d9d6d1"/><path d="M47 43v16c0 8 22 8 22 0V43z" fill="#7e6d62"/><circle cx="57" cy="42" r="12" fill="#c3cad0" stroke="#3a3c3f" stroke-width="2.500"/><circle cx="57" cy="42" r="8.500" fill="#8c99a6"/><path d="M49 44c5-3 11-3 16 0-2 6-13 8-16 0z" fill="#6b5546"/></svg></div>
    <i class="divider"></i>
    <div class="app wide"><svg viewBox="0 0 72 72"><path d="M12 8h13l3 4h34v30H12z" fill="#46b3e6"/><path d="M8 18h20v28H8zM50 20h14v25H50z" fill="#f4f4f4"/><path d="M9 20v26" stroke="#222" stroke-width="4" stroke-dasharray="3 2"/><path d="M12 5h21c15 2 24 10 26 25v39H12z" fill="#fcfcfc"/><path d="M33 5c8 0 12 5 12 16 9 0 13 3 14 10 1-14-12-25-26-26z" fill="#dedede"/></svg></div>
    <div class="app"><svg viewBox="0 0 72 72"><rect x="7" y="1" width="57" height="69" fill="#272822"/><path d="M7 1h57v2H7z" fill="#e2e2e2"/><path d="M13 7h38M13 10h40M14 13h36M13 17h27M15 20h22M13 24h24M15 27h18M13 31h30M15 34h19M13 38h25M13 42h36M15 46h19M13 50h28M13 55h24M13 59h26M13 63h25" stroke="#77786f" stroke-dasharray="7 1 4 2"/><path d="M47 48h19l3 20H44z" fill="#ededed"/><path d="M48 46h17l2 17H46z" fill="#555"/><text x="57" y="60" font-size="15" font-weight="bold" text-anchor="middle" fill="#fb9728">S</text></svg></div>
    <div class="app"><svg viewBox="0 0 72 72"><path d="M12 8l8-7 10 5 9-5 8 5 10 3-6 9H18z" fill="#eee"/><path d="M20 9l8 5-4 5zM42 6l8 8-7 4z" fill="#2b66a7"/><path d="M37 8l4 8-9 1z" fill="#d04a35"/><path d="M9 8l8 57q1 4 8 5h22q7-1 8-5l8-57c-8 11-46 11-54 0z" fill="url(#g-trash)"/><ellipse cx="36" cy="9" rx="27" ry="7" fill="none" stroke="#ddd" stroke-width="1.500"/></svg></div>
  </footer>
</div>
</body>
</html>
```
FILE: styles.css
```
* { box-sizing: border-box; }
body { margin: 0; font-family: "Liberation Sans", Arial, sans-serif; }
svg { display: block; flex: none; }
svg text { font-family: "Liberation Sans", Arial, sans-serif; }
svg .serif, svg .serif text { font-family: "Liberation Serif", serif; }
i, em { font-style: normal; }
.defs { position: absolute; }

.screen {
  position: relative;
  width: 2880px; height: 1800px; overflow: hidden;
  display: flex; flex-direction: column;
  background:
    linear-gradient(#b5b5b5, #a6a6a6 1500px, #b0b0b0 1548px, #888 1553px, #8e8e8e 1571px, #555 1571px, #555 1573px, #999 1574px, #929292 1593px, #555 1594px, #555 1595px, #999 1596px, #929292 1615px, #555 1616px, #555 1617px, #999 1618px, #929292 1637px, #666 1639px, #777 1643px, #d4d4d4 1645px, #b0b0b0 1690px, #c4c4c4 1706px, #aaa 1710px, #777 1717px, transparent 1718px) 0 0 / 120px 1718px no-repeat,
    #16161c;
}
.wallpaper { position: absolute; left: 0; bottom: 0; clip-path: polygon(0 18px, 2000px 18px, 2000px 0, 100% 0, 100% 100%, 0 100%); }

/* Menu bar */
.menubar {
  position: relative;
  height: 46px; flex: none;
  display: flex; align-items: center;
  padding: 1px 44px 0 42px;
  border-bottom: 2px solid #000;
  background: linear-gradient(90deg, #fbefe2, #fdebe3 15%, #fee8e7 32%, #f9dfe2 54%, #f4dfe1 66%, #efdfe6 84%, #ebdfec);
  font-size: 28px; line-height: 44px; letter-spacing: .6px; color: #46342f;
}
.apple { margin-right: 38px; margin-top: -4px; }
.m { white-space: nowrap; }
.w1 { width: 147px; } .w2 { width: 83px; } .w3 { width: 88px; } .w4 { width: 99px; }
.w5 { width: 130px; } .w6 { width: 186px; } .w7 { width: 127px; } .w8 { width: 143px; }
.status { margin-left: auto; display: flex; align-items: center; color: #392d33; letter-spacing: 0; }
.status svg { position: relative; top: -1px; }
.s1 { margin-right: 20px; } .s2 { margin-right: 17px; } .s3 { margin-right: 18px; }
.s4 { margin-right: 26px; } .s5 { margin-right: 27px; } .s6 { margin-right: 22px; }
.s7 { width: 62px; letter-spacing: -1.4px; } .s8 { margin-right: 26px; } .s9 { width: 199px; } .s10 { margin-right: 29px; }

/* Browser window */
.window {
  position: relative;
  width: 2874px; height: 1658px; margin-left: 6px; flex: none;
  display: flex; flex-direction: column;
  border-radius: 9px 9px 8px 8px; overflow: hidden;
}
.tabstrip {
  height: 73px; flex: none; position: relative;
  display: flex; align-items: flex-start;
  background: linear-gradient(#efefef, #dedede);
  border-bottom: 1.5px solid #959595;
}
.lights { display: flex; gap: 16px; padding: 26px 0 0 24px; width: 145px; flex: none; }
.lights i { width: 24px; height: 24px; border-radius: 50%; border: 1px solid; }
.red { background: #fc5b57; border-color: #e2443f; }
.amber { background: #fdbc40; border-color: #e0a032; }
.green { background: #2fc845; border-color: #1fae33; }
.tabs { display: flex; padding-top: 22px; }
.tab {
  position: relative; width: 198px; height: 50px; margin-right: -28px; flex: none;
  display: flex; align-items: center; padding-left: 33px; padding-top: 2px;
}
.t1 { z-index: 15; } .t2 { z-index: 14; } .t3 { z-index: 13; } .t4 { z-index: 12; } .t5 { z-index: 11; }
.t6 { z-index: 10; } .t7 { z-index: 9; } .t8 { z-index: 8; } .t9 { z-index: 7; } .t10 { z-index: 6; }
.t11 { z-index: 5; } .t12 { z-index: 4; } .active { z-index: 20; } .t14 { z-index: 3; } .t15 { z-index: 2; }
.shape { position: absolute; left: 0; top: 0; width: 198px; height: 50px; fill: url(#g-tab); stroke: #969696; stroke-width: 1.5; }
.active .shape { fill: url(#g-active); height: 52px; }
.fav { width: 32px; height: 32px; position: relative; }
.tt { position: relative; width: 68px; margin-left: 4px; overflow: hidden; white-space: nowrap; font-size: 23px; letter-spacing: -.4px; line-height: 32px; color: #000; }
.fade { -webkit-mask-image: linear-gradient(90deg, #000 70%, transparent); mask-image: linear-gradient(90deg, #000 70%, transparent); }
.x { position: relative; width: 16px; height: 16px; margin-left: 10px; }
.newtab { margin: 32px 0 0 23px; }
.profile {
  margin: 12px 8px 0 auto; width: 77px; height: 53px;
  border: 1.5px solid #aaa; border-radius: 6px;
  background: linear-gradient(#f1f1f1, #e0e0e0);
  font-size: 24px; line-height: 54px; text-align: center; color: #111;
}
.toolbar {
  height: 66px; flex: none; display: flex; align-items: center;
  padding-left: 18px; padding-top: 3px;
  background: linear-gradient(#ececec, #dfdfdf);
}
.back, .fwd, .reload { margin-top: -1px; }
.fwd { margin-left: 21px; }
.reload { margin-left: 26px; }
.omnibox {
  margin-left: 21px; width: 2297px; height: 54px; flex: none;
  display: flex; align-items: center; padding: 0 7px 2px 10px;
  background: #fff; border: 1.5px solid #a0a0a0; border-radius: 6px;
}
.url { margin-left: 11px; padding-top: 2px; font-size: 28px; letter-spacing: 1px; color: #000; }
.url em { color: #666; }
.react { margin-left: auto; margin-right: 6px; }
.bomb { margin: 12px 0 0 22px; }
.abp { margin: -2px 0 0 13px; }
.cookie { margin: -2px 0 0 28px; }
.mask { margin: -2px 0 0 26px; }
.ebay { width: 67px; margin-left: 24px; font-size: 21px; letter-spacing: -1.6px; line-height: 30px; }
.e1 { color: #e53238; } .e2 { color: #2a6be0; } .e3 { color: #f0b216; } .e4 { color: #7fb414; }

.bookmarks {
  height: 51px; flex: none; display: flex; align-items: center;
  padding: 0 0 5px 18px;
  background: linear-gradient(#dfdfdf, #d2d2d2);
  border-bottom: 1.5px solid #757575;
  font-size: 24px; letter-spacing: .2px; color: #000; white-space: nowrap;
}
.bm { display: flex; align-items: center; gap: 11px; flex: none; }
.bm svg { width: 32px; height: 32px; }
.bm span { line-height: 32px; padding-top: 1px; }
.bm .wide-text { letter-spacing: .55px; }
.bm .fade { width: 230px; overflow: hidden; letter-spacing: .3px; -webkit-mask-image: linear-gradient(90deg, #000 80%, transparent); mask-image: linear-gradient(90deg, #000 80%, transparent); }
.b0 { width: 129px; } .bm.b0 svg { width: 28px; height: 28px; }
.b1 { width: 158px; } .b2 { width: 304px; } .b3 { width: 302px; } .b4 { width: 136px; } .b5 { width: 302px; }
.b6 { width: 135px; } .b7 { width: 303px; } .b8 { width: 302px; } .b9 { width: 302px; } .b10 { width: 453px; }
.more { font-size: 27px; color: #444; }

/* Page */
.page { flex: 1; background: linear-gradient(#33aee6 1390px, #30a4d8 1468px); }
.appbar {
  position: relative; height: 128px; padding-left: 20px;
  background: #fff;
  box-shadow: 0 4px 10px rgba(0, 0, 0, .26), 0 2px 14px rgba(0, 0, 0, .14);
}
h1, h2 { margin: 0; font-family: Roboto, sans-serif; font-weight: 300; white-space: nowrap; }
h1 { font-size: 64px; line-height: 126px; color: #434343; letter-spacing: -.4px; -webkit-text-stroke: .5px #434343; }
.content { width: 2010px; margin-left: 432px; padding-top: 30px; }
h2 { font-size: 60px; line-height: 90px; color: #fff; margin: 0 0 26px -1px; letter-spacing: .15px; -webkit-text-stroke: .6px #fff; }
.grid { display: grid; grid-template-columns: repeat(4, 468px); column-gap: 46px; row-gap: 44px; align-items: start; }
.card {
  height: 400px; display: flex; align-items: center; justify-content: center; text-align: center;
  background: #fff; border-radius: 4px;
  box-shadow: 0 4px 10px rgba(0, 0, 0, .24), 0 3px 12px rgba(0, 0, 0, .14);
  font: 400 48px/72px Roboto, sans-serif; color: #212121;
}
.add { height: 320px; background: #ececec; }

/* Dock */
.dock {
  position: relative;
  width: 2760px; height: 96px; margin-left: 60px; flex: none;
  display: flex; padding: 9px 0 0 6px;
  border-radius: 10px 10px 0 0;
  background: linear-gradient(90deg, #76747a, #7a7880 8%, #68696f 13%, #70717a 22%, #8c8d98 27%, #74747e 33%, #686a70 38%, #75747e 48%, #767580 61%, #66666e 66%, #838594 73%, #7d8090 78%, #6f717f 86%, #7d7e8b 90%, #62656f);
  box-shadow: 0 0 18px rgba(0, 0, 0, .3);
}
.app { position: relative; width: 77.5px; height: 87px; flex: none; display: flex; justify-content: center; }
.app svg { width: 72px; height: 72px; }
.on::after, .wide::after { content: ""; position: absolute; left: 34px; bottom: 4px; width: 8px; height: 8px; border-radius: 50%; background: #05050c; }
.wide::after { left: 1px; width: 74px; border-radius: 4px; }
.badge {
  position: absolute; right: -2px; top: -1px; width: 28px; height: 28px; border-radius: 50%;
  background: #f7403c; color: #fff; font: 18px/28px "Liberation Sans", sans-serif; text-align: center;
}
.divider { width: 2px; height: 72px; margin: 4px 17px 0 17px; background: #50515d; }
```
